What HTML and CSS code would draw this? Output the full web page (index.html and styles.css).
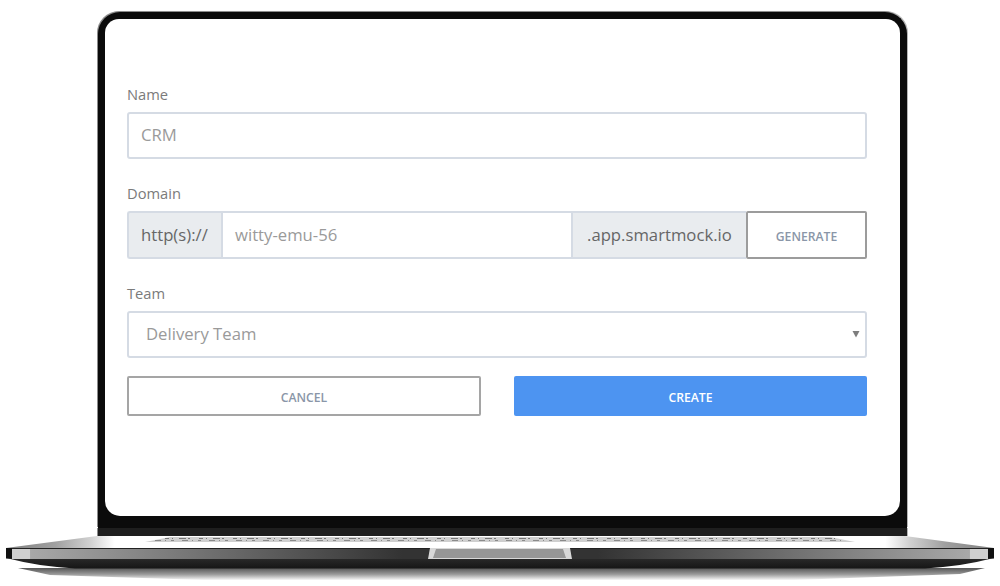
FILE: index.html
```html
<!DOCTYPE html>
<html lang="en">
<head>
    <meta charset="UTF-8">
    <meta name="viewport" content="width=device-width, initial-scale=1.0">
    <title>Create project</title>
    <link rel="stylesheet" href="styles.css">
</head>
<body>
    <div class="laptop">
        <div class="lid">
            <div class="screen">
                <form class="form">
                    <div class="label">Name</div>
                    <div class="field">CRM</div>

                    <div class="label">Domain</div>
                    <div class="group">
                        <div class="addon addon-left">http(s)://</div>
                        <div class="group-input">witty-emu-56</div>
                        <div class="addon addon-right">.app.smartmock.io</div>
                        <button type="button" class="btn btn-generate">GENERATE</button>
                    </div>

                    <div class="label">Team</div>
                    <div class="field field-select">
                        <span>Delivery Team</span>
                        <svg class="caret" viewBox="0 0 8 8"><polygon points="0.5,1 7.5,1 4,7.5" /></svg>
                    </div>

                    <div class="actions">
                        <button type="button" class="btn btn-cancel">CANCEL</button>
                        <button type="button" class="btn btn-create">CREATE</button>
                    </div>
                </form>
            </div>
        </div>
        <div class="hinge"></div>
        <svg class="base" viewBox="0 0 1000 50" aria-hidden="true">
            <defs>
                <linearGradient id="deck" x1="0" x2="1" y1="0" y2="0">
                    <stop offset="0" stop-color="#808080" />
                    <stop offset="0.05" stop-color="#a0a0a0" />
                    <stop offset="0.085" stop-color="#d0d0d0" />
                    <stop offset="0.11" stop-color="#fff" />
                    <stop offset="0.89" stop-color="#fff" />
                    <stop offset="0.915" stop-color="#d0d0d0" />
                    <stop offset="0.95" stop-color="#a0a0a0" />
                    <stop offset="1" stop-color="#808080" />
                </linearGradient>
                <linearGradient id="band" x1="0" x2="1" y1="0" y2="0">
                    <stop offset="0" stop-color="#cfcfcf" />
                    <stop offset="0.018" stop-color="#cfcfcf" />
                    <stop offset="0.019" stop-color="#a8a8a8" />
                    <stop offset="0.2" stop-color="#707070" />
                    <stop offset="0.4" stop-color="#333" />
                    <stop offset="0.6" stop-color="#333" />
                    <stop offset="0.8" stop-color="#707070" />
                    <stop offset="0.981" stop-color="#a8a8a8" />
                    <stop offset="0.982" stop-color="#cfcfcf" />
                    <stop offset="1" stop-color="#cfcfcf" />
                </linearGradient>
                <linearGradient id="under" x1="0" x2="0" y1="0" y2="1">
                    <stop offset="0" stop-color="#2a2a2a" />
                    <stop offset="1" stop-color="#161616" />
                </linearGradient>
                <linearGradient id="shadow" x1="0" x2="0" y1="0" y2="1">
                    <stop offset="0" stop-color="#555" />
                    <stop offset="0.5" stop-color="#999" />
                    <stop offset="1" stop-color="#fff" />
                </linearGradient>
            </defs>
            <!-- shadow on the table -->
            <path d="M18 32 H985 L960 38 L780 44.500 H220 L50 39 Z" fill="url(#shadow)" />
            <!-- underside -->
            <path d="M6 22 C30 28 50 31 75 32.500 H925 C950 31 970 28 994 22 Z" fill="url(#under)" />
            <!-- top deck -->
            <polygon points="97,0 905,0 994,12 6,12" fill="url(#deck)" />
            <!-- keyboard strip -->
            <polygon points="145,6 170,1 830,1 855,6" fill="#cfcfcf" />
            <line class="keys" x1="165" y1="2.500" x2="835" y2="2.500" />
            <line class="keys keys-low" x1="155" y1="4.500" x2="845" y2="4.500" />
            <!-- front edge -->
            <rect x="6" y="12" width="988" height="1.500" fill="#222" />
            <rect x="12" y="13" width="976" height="10" fill="url(#band)" />
            <rect x="6" y="12" width="6" height="10.500" fill="#111" />
            <rect x="988" y="12" width="6" height="10.500" fill="#111" />
            <!-- thumb notch -->
            <polygon points="428,23 430,12 570,12 572,23" fill="#d8d8d8" />
            <polygon points="433,22 436,13 563,13 566,22" fill="#969696" />
        </svg>
    </div>
</body>
</html>
```

FILE: styles.css
```css
body {
    margin: 0;
    height: 586px;
    overflow: hidden;
    background-color: #fff;
    font-family: "Open Sans", "Liberation Sans", sans-serif;
}

.laptop {
    padding-top: 12px;
}

.lid {
    width: 809px;
    height: 516px;
    margin-left: 98px;
    box-sizing: border-box;
    border: solid #0b0b0b;
    border-width: 7px 7px 0 7px;
    border-radius: 22px 22px 0 0;
    background-color: #0b0b0b;
    box-shadow: -1px -1px 0 0 #8c8c8c, 1px -1px 0 0 #b5b5b5;
}

.screen {
    height: 497px;
    border-radius: 14px 14px 15px 15px;
    background-color: #fff;
    overflow: hidden;
}

.hinge {
    box-sizing: border-box;
    width: 809px;
    height: 8px;
    margin-left: 98px;
    background-color: #1e1e1e;
    box-shadow: -1px 0 0 0 #8c8c8c, 1px 0 0 0 #b5b5b5;
}

.form {
    padding: 65px 33px 0 22px;
}

.label {
    height: 20px;
    margin-bottom: 8px;
    font-size: 14.700px;
    line-height: 20px;
    color: #7b7b7b;
}

.field {
    display: flex;
    align-items: center;
    justify-content: space-between;
    box-sizing: border-box;
    height: 47px;
    margin-bottom: 24px;
    padding: 0 12px 2px;
    border: 2px solid #d5dbe4;
    border-radius: 3px;
    font-size: 16.700px;
    color: #9a9a9a;
}

.field-select {
    margin-bottom: 18px;
    padding: 0 5px 2px 17px;
}

.caret {
    width: 8px;
    height: 8px;
    fill: #7d7d7d;
}

.group {
    display: flex;
    box-sizing: border-box;
    height: 48px;
    margin-bottom: 24px;
}

.addon,
.group-input {
    display: flex;
    align-items: center;
    box-sizing: border-box;
    padding-bottom: 2px;
    border: solid #d5dbe4;
    border-width: 2px 0;
    font-size: 16.700px;
}

.addon {
    background-color: #e9ecef;
    color: #666;
}

.addon-left {
    width: 94px;
    padding-left: 12px;
    border-left-width: 2px;
    border-radius: 3px 0 0 3px;
}

.addon-right {
    width: 173px;
    padding-left: 14px;
}

.group-input {
    width: 352px;
    padding-left: 12px;
    border-left-width: 2px;
    border-right-width: 2px;
    color: #9a9a9a;
}

.btn {
    box-sizing: border-box;
    padding: 0;
    border-radius: 2px;
    background-color: #fff;
    font-family: inherit;
    font-size: 12.200px;
    font-weight: 600;
    color: #8a96a8;
}

.btn-generate {
    width: 121px;
    padding-top: 2px;
    border: 2px solid #9c9c9c;
}

.actions {
    display: grid;
    grid-template-columns: 354px 353px;
    column-gap: 33px;
}

.btn-cancel,
.btn-create {
    height: 40px;
    padding-top: 2px;
}

.btn-cancel {
    border: 2px solid #a5a5a5;
}

.btn-create {
    border: 0;
    background-color: #4d94f1;
    color: #fff;
}

.base {
    display: block;
    width: 1000px;
    height: 50px;
}

.keys {
    stroke: #777;
    stroke-width: 1;
    stroke-dasharray: 4 3 1 6 7 2 2 9;
}

.keys-low {
    stroke: #8a8a8a;
    stroke-dasharray: 6 4 1 5 3 8;
}
```
